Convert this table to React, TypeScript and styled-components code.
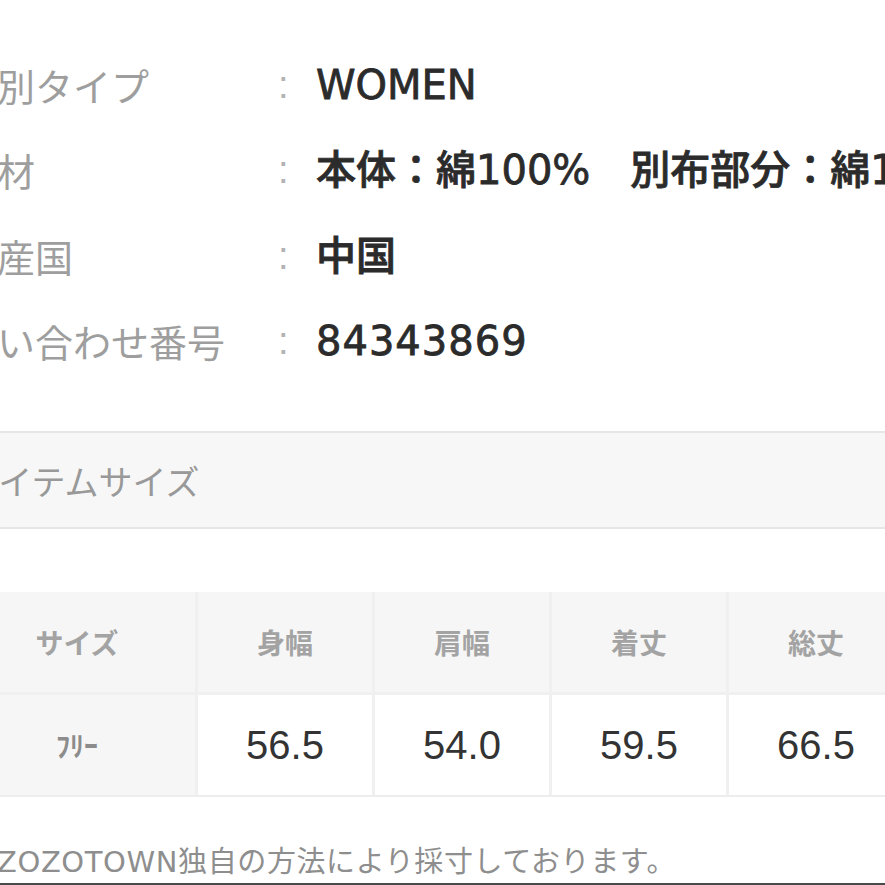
import React from "react";
import styled, { createGlobalStyle } from "styled-components";

const GlobalStyle = createGlobalStyle`
  html, body {
    margin: 0;
    padding: 0;
    background: #ffffff;
    overflow: hidden;
  }
  body {
    width: 885px;
    height: 885px;
  }
`;

const Page = styled.div`
  width: 960px;
  margin-left: -41px;
  padding-top: 42px;
  font-family: "Noto Sans CJK JP", sans-serif;
`;

const SpecRow = styled.div`
  display: grid;
  grid-template-columns: 305px 52px 1fr;
  align-items: center;
  height: 85.5px;
`;

const Label = styled.div`
  font-size: 38px;
  line-height: 1;
  color: #9e9e9e;
  white-space: nowrap;
  font-weight: 400;
`;

const Colon = styled.div`
  font-family: "Liberation Sans", sans-serif;
  font-size: 38px;
  line-height: 1;
  color: #b3b3b3;
  padding-left: 14px;
`;

const Value = styled.div<{ $spaced?: boolean }>`
  font-family: "DejaVu Sans", "Noto Sans CJK JP", sans-serif;
  font-size: 40px;
  line-height: 1;
  font-weight: 500;
  color: #2b2b2b;
  -webkit-text-stroke: 0.8px #2b2b2b;
  white-space: nowrap;
  letter-spacing: ${(p) => (p.$spaced ? "1px" : "0")};
`;

const SectionHeader = styled.h2`
  margin: 47px 0 0;
  height: 94px;
  display: flex;
  align-items: center;
  padding-left: 7px;
  background: #f7f7f7;
  border-top: 2px solid #e6e6e6;
  border-bottom: 2px solid #e6e6e6;
  font-size: 34px;
  font-weight: 400;
  color: #999999;
  white-space: nowrap;
`;

const SizeTable = styled.div`
  margin-top: 63px;
  display: grid;
  grid-template-columns: 236px repeat(4, 174px);
  grid-template-rows: 100px 100px;
  gap: 3px;
  background: #f0f0f0;
  border-bottom: 2px solid #ededed;
  width: max-content;
`;

const HeadCell = styled.div`
  display: flex;
  align-items: center;
  justify-content: center;
  background: #f6f6f6;
  font-size: 28px;
  font-weight: 700;
  color: #a3a3a3;
`;

const RowHead = styled(HeadCell)`
  color: #8c8c8c;
`;

const DataCell = styled.div`
  display: flex;
  align-items: center;
  justify-content: center;
  background: #ffffff;
  font-family: "Liberation Sans", sans-serif;
  font-size: 40px;
  color: #333333;
`;

const Note = styled.p`
  margin: 45px 0 0;
  padding-left: 38px;
  height: 40px;
  line-height: 40px;
  font-family: "DejaVu Sans", "Noto Sans CJK JP", sans-serif;
  font-size: 29px;
  letter-spacing: 0.6px;
  color: #8e8e8e;
  white-space: nowrap;
`;

const BottomRule = styled.div`
  margin-top: 1px;
  height: 2px;
  background: #4a4a4a;
`;

const specs: { label: string; value: string; spaced?: boolean }[] = [
  { label: "性別タイプ", value: "WOMEN" },
  { label: "素材", value: "本体：綿100%　別布部分：綿100%" },
  { label: "原産国", value: "中国" },
  { label: "問い合わせ番号", value: "84343869", spaced: true },
];

const heads = ["サイズ", "身幅", "肩幅", "着丈", "総丈"];
const values = ["56.5", "54.0", "59.5", "66.5"];

export default function App() {
  return (
    <>
      <GlobalStyle />
      <Page>
        {specs.map((s) => (
          <SpecRow key={s.label}>
            <Label>{s.label}</Label>
            <Colon>:</Colon>
            <Value $spaced={s.spaced}>{s.value}</Value>
          </SpecRow>
        ))}
        <SectionHeader>アイテムサイズ</SectionHeader>
        <SizeTable>
          {heads.map((h) => (
            <HeadCell key={h}>{h}</HeadCell>
          ))}
          <RowHead>ﾌﾘｰ</RowHead>
          {values.map((v, i) => (
            <DataCell key={i}>{v}</DataCell>
          ))}
        </SizeTable>
        <Note>ZOZOTOWN独自の方法により採寸しております。</Note>
        <BottomRule />
      </Page>
    </>
  );
}
